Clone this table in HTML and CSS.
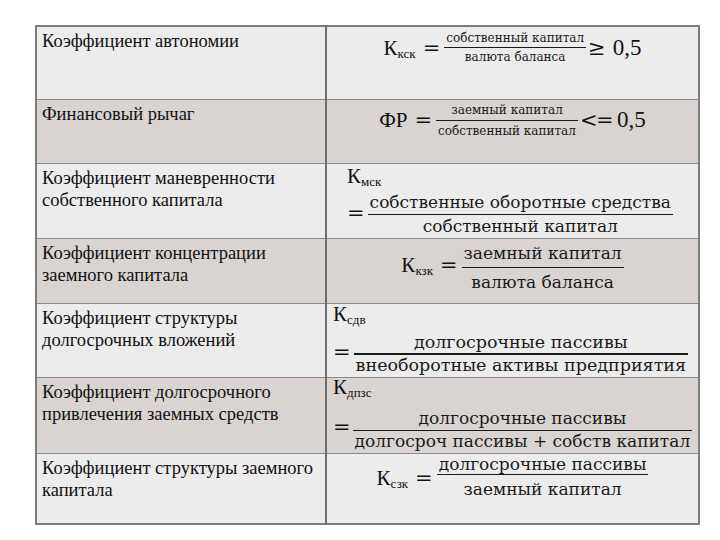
FILE: index.html
```html
<!DOCTYPE html>
<html lang="ru">
<head>
<meta charset="utf-8">
<link rel="stylesheet" href="styles.css">
</head>
<body>
<div class="page">
<table class="tbl">
  <colgroup><col class="c1"><col class="c2"></colgroup>
  <tr class="r1 light">
    <td class="name">Коэффициент автономии</td>
    <td class="f">
      <div class="formula">
        <span class="k">К<sub>кск</sub></span><span class="eq">=</span><span class="frac sm"><span class="num">собственный капитал</span><span class="den">валюта баланса</span></span><span class="tail"><span class="rel">≥</span>0,5</span>
      </div>
    </td>
  </tr>
  <tr class="r2 dark">
    <td class="name">Финансовый рычаг</td>
    <td class="f">
      <div class="formula">
        <span class="k">ФР</span><span class="eq">=</span><span class="frac sm"><span class="num">заемный капитал</span><span class="den">собственный капитал</span></span><span class="tail"><span class="rel lt">&lt;=</span>0,5</span>
      </div>
    </td>
  </tr>
  <tr class="r3 light">
    <td class="name">Коэффициент маневренности собственного капитала</td>
    <td class="f">
      <div class="stack">
        <div class="k">К<sub>мск</sub></div>
        <div class="line"><span class="eq l">=</span><span class="frac lg"><span class="num">собственные оборотные средства</span><span class="den">собственный капитал</span></span></div>
      </div>
    </td>
  </tr>
  <tr class="r4 dark">
    <td class="name">Коэффициент концентрации заемного капитала</td>
    <td class="f">
      <div class="formula">
        <span class="k">К<sub>кзк</sub></span><span class="eq">=</span><span class="frac lg"><span class="num">заемный капитал</span><span class="den">валюта баланса</span></span>
      </div>
    </td>
  </tr>
  <tr class="r5 light">
    <td class="name">Коэффициент структуры долгосрочных вложений</td>
    <td class="f">
      <div class="stack">
        <div class="k">К<sub>сдв</sub></div>
        <div class="line"><span class="eq l">=</span><span class="frac lg thick"><span class="num">долгосрочные пассивы</span><span class="den">внеоборотные активы предприятия</span></span></div>
      </div>
    </td>
  </tr>
  <tr class="r6 dark">
    <td class="name">Коэффициент долгосрочного привлечения заемных средств</td>
    <td class="f">
      <div class="stack">
        <div class="k">К<sub>дпзс</sub></div>
        <div class="line"><span class="eq l">=</span><span class="frac lg"><span class="num">долгосрочные пассивы</span><span class="den">долгосроч пассивы + собств капитал</span></span></div>
      </div>
    </td>
  </tr>
  <tr class="r7 light">
    <td class="name">Коэффициент структуры заемного капитала</td>
    <td class="f">
      <div class="formula">
        <span class="k">К<sub>сзк</sub></span><span class="eq">=</span><span class="frac lg"><span class="num">долгосрочные пассивы</span><span class="den">заемный капитал</span></span>
      </div>
    </td>
  </tr>
</table>
</div>
</body>
</html>
```

FILE: styles.css
```css
html, body {
  margin: 0;
  padding: 0;
  background: #ffffff;
}
.page {
  padding: 25px 0 0 35px;
}
.tbl {
  border-collapse: collapse;
  table-layout: fixed;
  width: 663px;
  border: 2px solid #7d7d7d;
}
.c1 { width: 290px; }
.c2 { width: 373px; }
.tbl td {
  border-top: 1px solid #8a8a8a;
  border-bottom: 1px solid #8a8a8a;
  padding: 0;
  vertical-align: top;
  color: #111;
}
.tbl td.name {
  border-right: 2px solid #6f6f6f;
  font-family: "Liberation Serif", "Times New Roman", serif;
  font-size: 18.5px;
  line-height: 22px;
  padding: 3px 4px 0 5px;
}
.light td { background: #edecec; }
.dark td { background: #d9d4d1; }
.r1 { height: 73px; }
.r2 { height: 64px; }
.r3 { height: 75px; }
.r4 { height: 65px; }
.r5 { height: 74px; }
.r6 { height: 76px; }
.r7 { height: 71px; }

.f {
  font-family: "Liberation Serif", "Times New Roman", serif;
  white-space: nowrap;
}

/* centered formulas */
.formula {
  display: flex;
  justify-content: center;
  align-items: center;
}
.r1 .formula { padding-top: 2px; }
.r2 .formula { padding-top: 0; }
.r4 .formula { padding-top: 0; }
.r7 .formula { padding-top: 0; }

/* stacked (wrapped) formulas */
.stack { display: flex; flex-direction: column; align-items: flex-start; }
.r3 .stack { padding: 2px 0 0 20px; }
.r5 .stack { padding: 0 0 0 6px; }
.r6 .stack { padding: 0 0 0 6px; }
.line {
  display: flex;
  align-items: center;
}
.r3 .line { margin-top: 4px; }
.r5 .line { margin-top: 7px; }
.r6 .line { margin-top: 9px; }
.r6 .k { line-height: 19px; }

.k {
  font-size: 21px;
  line-height: 20px;
}
.k sub {
  font-size: 13px;
  line-height: 0;
  vertical-align: -3px;
}
.eq {
  font-family: "DejaVu Serif", serif;
  font-size: 21px;
  line-height: 20px;
  margin: 0 4px 0 7px;
}
.eq.l { margin: 0 3px 0 0; }
.r5 .eq.l { margin: 0 3px 3px 0; }
.r6 .eq.l { margin: 0 2px 3px 0; }
.r4 .k, .r4 .eq { margin-bottom: 4px; }
.tail {
  font-size: 23px;
  line-height: 20px;
  margin-left: 2px;
}
.rel {
  font-family: "DejaVu Serif", serif;
  font-size: 21px;
  margin-right: 7px;
}
.rel.lt { margin-right: 5px; letter-spacing: -1.5px; }

.frac {
  display: inline-flex;
  flex-direction: column;
  align-items: center;
  font-family: "DejaVu Serif", serif;
  color: #1a1a1a;
}
.frac .num { padding: 0 2px; }
.frac .den {
  border-top: 1px solid #1a1a1a;
  align-self: stretch;
  text-align: center;
  padding: 0 2px;
}
.frac.thick .den { border-top-width: 2px; }
.frac.sm { font-size: 12px; }
.r1 .num, .r1 .den { line-height: 18px; }
.r2 .num, .r2 .den { line-height: 20px; }
.frac.lg { font-size: 17px; }
.r5 .frac.lg { font-size: 17.5px; }
.r3 .num { line-height: 24px; }
.r3 .den { line-height: 22px; }
.r4 .num, .r4 .den { line-height: 28px; }
.r5 .num { line-height: 22px; }
.r5 .den { line-height: 21px; }
.r6 .num { line-height: 24px; }
.r6 .den { line-height: 21px; }
.r7 .num { line-height: 20px; }
.r7 .den { line-height: 28px; }
```
